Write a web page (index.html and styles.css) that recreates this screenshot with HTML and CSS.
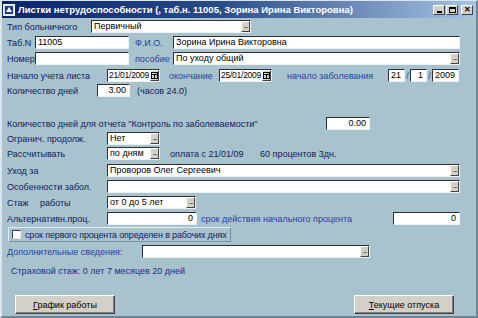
FILE: index.html
```html
<!DOCTYPE html>
<html lang="ru">
<head>
    <meta charset="UTF-8">
    <title>Листки нетрудоспособности</title>
    <link rel="stylesheet" href="styles.css">
</head>
<body>

<div class="window">
    <div class="titlebar">
        <svg class="app-icon" width="12" height="12" viewBox="0 0 12 12">
            <rect x="0.5" y="0.5" width="11" height="11" fill="#d8e4f4" stroke="#f0f4fc"/>
            <rect x="2" y="2" width="8" height="8" fill="#1c3c8c"/>
            <path d="M3 8 L6 3 L9 8 Z" fill="#ffffff"/>
        </svg>
        <span class="title">Листки нетрудоспособности (, таб.н. 11005, Зорина Ирина Викторовна)</span>
        <div class="controls">
            <span class="cbtn"><span class="min-bar"></span></span>
            <span class="cbtn"><span class="max-box"></span></span>
            <span class="cbtn close">✕</span>
        </div>
    </div>

    <div class="content">
        <div class="row">
            <span class="lbl w84">Тип больничного</span>
            <span class="field w160">Первичный<span class="dots">...</span></span>
        </div>

        <div class="row">
            <span class="lbl w28">Таб.N</span>
            <span class="field w94">11005</span>
            <span class="lbl blue ml6 w38">Ф.И.О.</span>
            <span class="field w287">Зорина Ирина Викторовна</span>
        </div>

        <div class="row">
            <span class="lbl w28">Номер</span>
            <span class="field w94"></span>
            <span class="lbl blue ml6 w38">пособие</span>
            <span class="field w287">По уходу общий<span class="dots">...</span></span>
        </div>

        <div class="row gap-17">
            <span class="lbl w100">Начало учета листа</span>
            <span class="field date w53">21/01/2009<span class="cal"><svg width="7" height="7" viewBox="0 0 7 7"><rect x="0.5" y="0.5" width="6" height="6" fill="none" stroke="#000"/><path d="M1 2.5 H6 M3.5 2.5 V6.5" stroke="#000"/></svg></span></span>
            <span class="lbl blue ml9 w50">окончание</span>
            <span class="field date w53">25/01/2009<span class="cal"><svg width="7" height="7" viewBox="0 0 7 7"><rect x="0.5" y="0.5" width="6" height="6" fill="none" stroke="#000"/><path d="M1 2.5 H6 M3.5 2.5 V6.5" stroke="#000"/></svg></span></span>
            <span class="lbl blue ml15 w101">начало заболевания</span>
            <span class="field num w17">21</span>
            <span class="slash">/</span>
            <span class="field num w17">1</span>
            <span class="slash">/</span>
            <span class="field num w27">2009</span>
        </div>

        <div class="row gap-15">
            <span class="lbl w90">Количество дней</span>
            <span class="field num w33">3.00</span>
            <span class="note ml7">(часов 24.0)</span>
        </div>

        <div class="row gap-33">
            <span class="lbl w319">Количество дней для отчета "Контроль по заболеваемости"</span>
            <span class="field num w44">0.00</span>
        </div>

        <div class="row gap-15">
            <span class="lbl w100">Огранич. продолж.</span>
            <span class="field w53">Нет<span class="dots">...</span></span>
        </div>

        <div class="row gap-15">
            <span class="lbl w100">Рассчитывать</span>
            <span class="field w53">по дням<span class="dots">...</span></span>
            <span class="note ml10 w90">оплата с 21/01/09</span>
            <span class="note">60 процентов 3дн.</span>
        </div>

        <div class="row gap-17">
            <span class="lbl w100">Уход за</span>
            <span class="field w353">Проворов Олег Сергеевич<span class="dots">...</span></span>
        </div>

        <div class="row">
            <span class="lbl w100">Особенности забол.</span>
            <span class="field w353"><span class="dots">...</span></span>
        </div>

        <div class="row">
            <span class="lbl w33">Стаж</span>
            <span class="lbl w67">работы</span>
            <span class="field w89">от 0 до 5 лет<span class="dots">...</span></span>
        </div>

        <div class="row">
            <span class="lbl w100">Альтернативн.проц.</span>
            <span class="field num w90">0</span>
            <span class="lbl blue ml4 w192">срок действия начального процента</span>
            <span class="field num w67">0</span>
        </div>

        <div class="check-panel">
            <span class="checkbox"></span>
            <span class="note">срок первого процента определен в рабочих днях</span>
        </div>

        <div class="row gap-18">
            <span class="lbl blue w135">Дополнительные сведения:</span>
            <span class="field w228"><span class="dots">...</span></span>
        </div>

        <div class="insurance">Страховой стаж: 0 лет 7 месяцев 20 дней</div>

        <div class="buttons">
            <button class="btn"><u>Г</u>рафик работы</button>
            <button class="btn"><u>Т</u>екущие отпуска</button>
        </div>
    </div>
</div>

</body>
</html>
```

FILE: styles.css
```css
* {
    margin: 0;
    padding: 0;
    box-sizing: border-box;
}

body {
    width: 478px;
    height: 318px;
    overflow: hidden;
    background: #a8c2ce;
    font-family: 'Liberation Sans', Arial, sans-serif;
    font-size: 9px;
    color: #14205a;
}

.window {
    width: 478px;
    height: 318px;
    background: #a8c2ce;
    border-left: 2px solid #dbe6ec;
    border-top: 1px solid #dbe6ec;
    border-right: 2px solid #6d8593;
    border-bottom: 2px solid #6d8593;
}

.titlebar {
    height: 17px;
    display: flex;
    align-items: center;
    padding-left: 1px;
    background: linear-gradient(90deg, #0a246a, #2a4a88 45%, #a6c4e4);
    color: #fff;
}

.app-icon {
    flex: none;
}

.title {
    margin-left: 3px;
    font-weight: bold;
    font-size: 9.5px;
    white-space: nowrap;
}

.controls {
    margin-left: auto;
    margin-right: 3px;
    display: flex;
    gap: 1px;
}

.cbtn {
    width: 12px;
    height: 10px;
    background: #d4d0c8;
    border: 1px solid;
    border-color: #fff #404040 #404040 #fff;
    display: flex;
    align-items: center;
    justify-content: center;
    color: #000;
    font-size: 8px;
    font-weight: bold;
    line-height: 1;
}

.cbtn.close {
    margin-left: 2px;
}

.min-bar {
    width: 5px;
    height: 2px;
    background: #000;
    margin-top: 4px;
}

.max-box {
    width: 7px;
    height: 6px;
    border: 1px solid #000;
    border-top-width: 2px;
}

.content {
    padding: 2px 0 0 5px;
}

.row {
    display: flex;
    align-items: center;
    height: 13px;
    margin-top: 3px;
    white-space: nowrap;
}

.row:first-child {
    margin-top: 0;
}

.gap-15 { margin-top: 2px; }
.gap-17 { margin-top: 4px; }
.gap-18 { margin-top: 3px; }
.gap-33 { margin-top: 20px; }

.lbl,
.note {
    flex: none;
    white-space: nowrap;
}

.blue {
    color: #2642a2;
}

.field {
    flex: none;
    position: relative;
    height: 13px;
    background: #fff;
    border: 1px solid;
    border-color: #303030 #eef2f4 #eef2f4 #303030;
    color: #000;
    padding: 0 2px;
    line-height: 11px;
    overflow: hidden;
}

.field.date {
    padding-left: 1px;
    font-size: 8.5px;
    letter-spacing: -0.25px;
}

.field.num {
    text-align: right;
    padding-right: 3px;
}

.dots,
.cal {
    position: absolute;
    right: 0;
    top: 0;
    width: 9px;
    height: 11px;
    background: #d4d0c8;
    border: 1px solid;
    border-color: #fff #404040 #404040 #fff;
    color: #000;
    font-size: 8px;
    line-height: 8px;
    text-align: center;
    letter-spacing: -1px;
}

.cal {
    display: flex;
    align-items: center;
    justify-content: center;
}

.slash {
    width: 5px;
    text-align: center;
    color: #2642a2;
}

.insurance {
    margin: 8px 0 0 4px;
    color: #1c2c88;
}

.check-panel {
    display: flex;
    align-items: center;
    gap: 4px;
    width: 223px;
    height: 15px;
    margin: 2px 0 0 1px;
    padding-left: 3px;
    border: 1px solid;
    border-color: #e4eef2 #7890a0 #7890a0 #e4eef2;
    white-space: nowrap;
    letter-spacing: -0.15px;
}

.checkbox {
    flex: none;
    width: 9px;
    height: 9px;
    background: #fff;
    border: 1px solid;
    border-color: #404040 #e8e8e8 #e8e8e8 #404040;
}

.buttons {
    display: flex;
    justify-content: space-between;
    margin: 19px 0 0 8px;
    width: 439px;
}

.btn {
    width: 100px;
    height: 19px;
    background: #d4d0c8;
    border: 1px solid;
    border-color: #fff #404040 #404040 #fff;
    box-shadow: inset -1px -1px 0 #808080;
    font-family: 'Liberation Sans', Arial, sans-serif;
    font-size: 9px;
    color: #000;
}

.ml4 { margin-left: 4px; }
.ml6 { margin-left: 6px; }
.ml7 { margin-left: 7px; }
.ml9 { margin-left: 9px; }
.ml10 { margin-left: 10px; }
.ml15 { margin-left: 15px; }

.w17 { width: 17px; }
.w27 { width: 27px; }
.w28 { width: 28px; }
.w33 { width: 33px; }
.w38 { width: 38px; }
.w44 { width: 44px; }
.w50 { width: 50px; }
.w53 { width: 53px; }
.w67 { width: 67px; }
.w84 { width: 84px; }
.w89 { width: 89px; }
.w90 { width: 90px; }
.w94 { width: 94px; }
.w100 { width: 100px; }
.w101 { width: 101px; }
.w135 { width: 135px; }
.w160 { width: 160px; }
.w192 { width: 192px; }
.w228 { width: 228px; }
.w287 { width: 287px; }
.w319 { width: 319px; }
.w353 { width: 353px; }
```
